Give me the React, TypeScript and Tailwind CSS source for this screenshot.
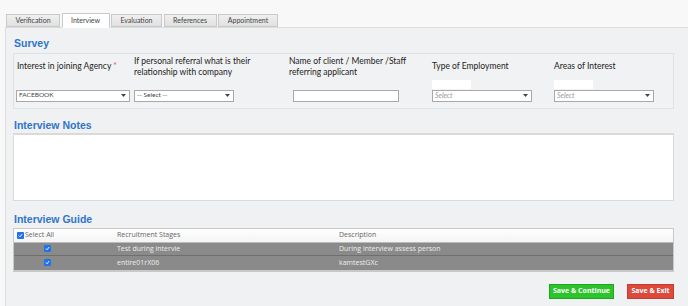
import React from 'react';

const tabs = ['Verification', 'Interview', 'Evaluation', 'References', 'Appointment'];
const tabW = ['w-[54px]', 'w-[48px]', 'w-[51px]', 'w-[53px]', 'w-[60px]'];

function Caret() {
  return (
    <svg width="5" height="3" viewBox="0 0 5 3" className="shrink-0">
      <path d="M0 0h5L2.5 3z" fill="#444" />
    </svg>
  );
}

function Select({ value, italic, w }: { value: string; italic?: boolean; w: string }) {
  return (
    <div className={`${w} h-[12px] bg-white border border-[#a9a9a9] flex items-center justify-between pl-[2px] pr-[3px]`}>
      <span className={`leading-none ${italic ? 'text-[7px] italic text-[#999]' : 'text-[6.5px] text-[#444]'}`}>{value}</span>
      <Caret />
    </div>
  );
}

function Check() {
  return (
    <span className="inline-flex w-[7px] h-[7px] rounded-[1px] bg-[#1e74e8] items-center justify-center">
      <svg width="5" height="5" viewBox="0 0 5 5">
        <path d="M0.8 2.6l1.2 1.2 2.2-2.8" stroke="#fff" strokeWidth="0.9" fill="none" />
      </svg>
    </span>
  );
}

export default function App() {
  const heading = "pl-[1px] text-[10.5px] font-bold text-[#2f75cc] leading-none font-['Liberation_Sans',sans-serif]";
  return (
    <div className="w-[688px] h-[306px] bg-[#f8f8f8] overflow-hidden font-['Lato',sans-serif]">
      <div className="h-[13px]" />
      {/* tabs */}
      <div className="flex items-end h-[14px] pl-[6px] gap-[1.5px] relative z-10">
        {tabs.map((t, i) => (
          <div
            key={t}
            className={`${tabW[i]} flex items-center justify-center text-[7px] text-[#444] border border-[#c9c9c9] ${
              i === 1 ? 'h-[15px] bg-white border-b-white -mb-[1px]' : 'h-[13px] bg-gradient-to-b from-[#f0f0f0] to-[#e0e0e0]'
            }`}
          >
            {t}
          </div>
        ))}
      </div>
      {/* panel */}
      <div className="ml-[5px] h-[279px] bg-[#f0f1f3] border-l border-t border-[#dcdcdc] pl-[7px] pr-[14px]">
        <div className="h-[10px]" />
        <div className={heading}>Survey</div>
        <div className="mt-[4px] border border-[#e0e1e3] bg-[#f1f2f4] pl-[2px] pt-[2px] pb-[6px]">
          <div className="flex h-[22px] items-center text-[8.5px] leading-[11px] text-[#222]">
            <div className="w-[118px] pl-[1px]">
              Interest in joining Agency <span className="text-[#e05a4f]">*</span>
            </div>
            <div className="w-[155px]">
              If personal referral what is their
              <br />
              relationship with company
            </div>
            <div className="w-[143px]">
              Name of client / Member /Staff
              <br />
              referring applicant
            </div>
            <div className="w-[122px]">Type of Employment</div>
            <div>Areas of Interest</div>
          </div>
          <div className="flex h-[12px] items-start pt-[2px]">
            <div className="w-[416px]" />
            <div className="w-[122px]">
              <div className="w-[39px] h-[9px] bg-white" />
            </div>
            <div className="w-[39px] h-[9px] bg-white" />
          </div>
          <div className="flex items-center">
            <div className="w-[118px]">
              <Select value="FACEBOOK" w="w-[114px]" />
            </div>
            <div className="w-[155px]">
              <Select value="-- Select --" w="w-[100px]" />
            </div>
            <div className="w-[143px] pl-[4px]">
              <div className="w-[106px] h-[12px] bg-white border border-[#a9a9a9]" />
            </div>
            <div className="w-[122px]">
              <Select value="Select" italic w="w-[100px]" />
            </div>
            <Select value="Select" italic w="w-[100px]" />
          </div>
        </div>

        <div className="h-[11px]" />
        <div className={heading}>Interview Notes</div>
        <div className="mt-[3px] h-[68px] bg-white border border-[#dadada] border-t-2" />

        <div className="h-[13px]" />
        <div className={heading}>Interview Guide</div>
        <div className="mt-[3px] border border-[#c8c8c8] border-b-2 font-['Open_Sans',sans-serif] text-[7px]">
          <div className="flex h-[14px] items-center bg-gradient-to-b from-white to-[#f4f4f4] text-[#666] border-b border-[#bbb]">
            <div className="w-[103px] flex items-center gap-[1px] pl-[3px]">
              <Check />
              <span>Select All</span>
            </div>
            <div className="w-[222px]">Recruitment Stages</div>
            <div>Description</div>
          </div>
          {[
            ['Test during intervie', 'During interview assess person'],
            ['entire01rX06', 'kamtestGXc'],
          ].map(([a, b], i) => (
            <div key={i} className={`flex h-[13.5px] items-center bg-[#8a8a8a] text-[#eee] ${i === 0 ? 'border-b border-[#6f6f6f]' : ''}`}>
              <div className="w-[103px] pl-[30px] flex items-center">
                <Check />
              </div>
              <div className="w-[222px]">{a}</div>
              <div>{b}</div>
            </div>
          ))}
        </div>

        <div className="flex justify-end gap-[13px] mt-[12px] font-['Open_Sans',sans-serif] text-[7px] font-bold text-white">
          <button className="w-[65px] h-[15px] bg-[#2bc52b] border border-[#22a322]">Save &amp; Continue</button>
          <button className="w-[47px] h-[15px] bg-[#dc4a3c] border border-[#c23d30]">Save &amp; Exit</button>
        </div>
      </div>
    </div>
  );
}
